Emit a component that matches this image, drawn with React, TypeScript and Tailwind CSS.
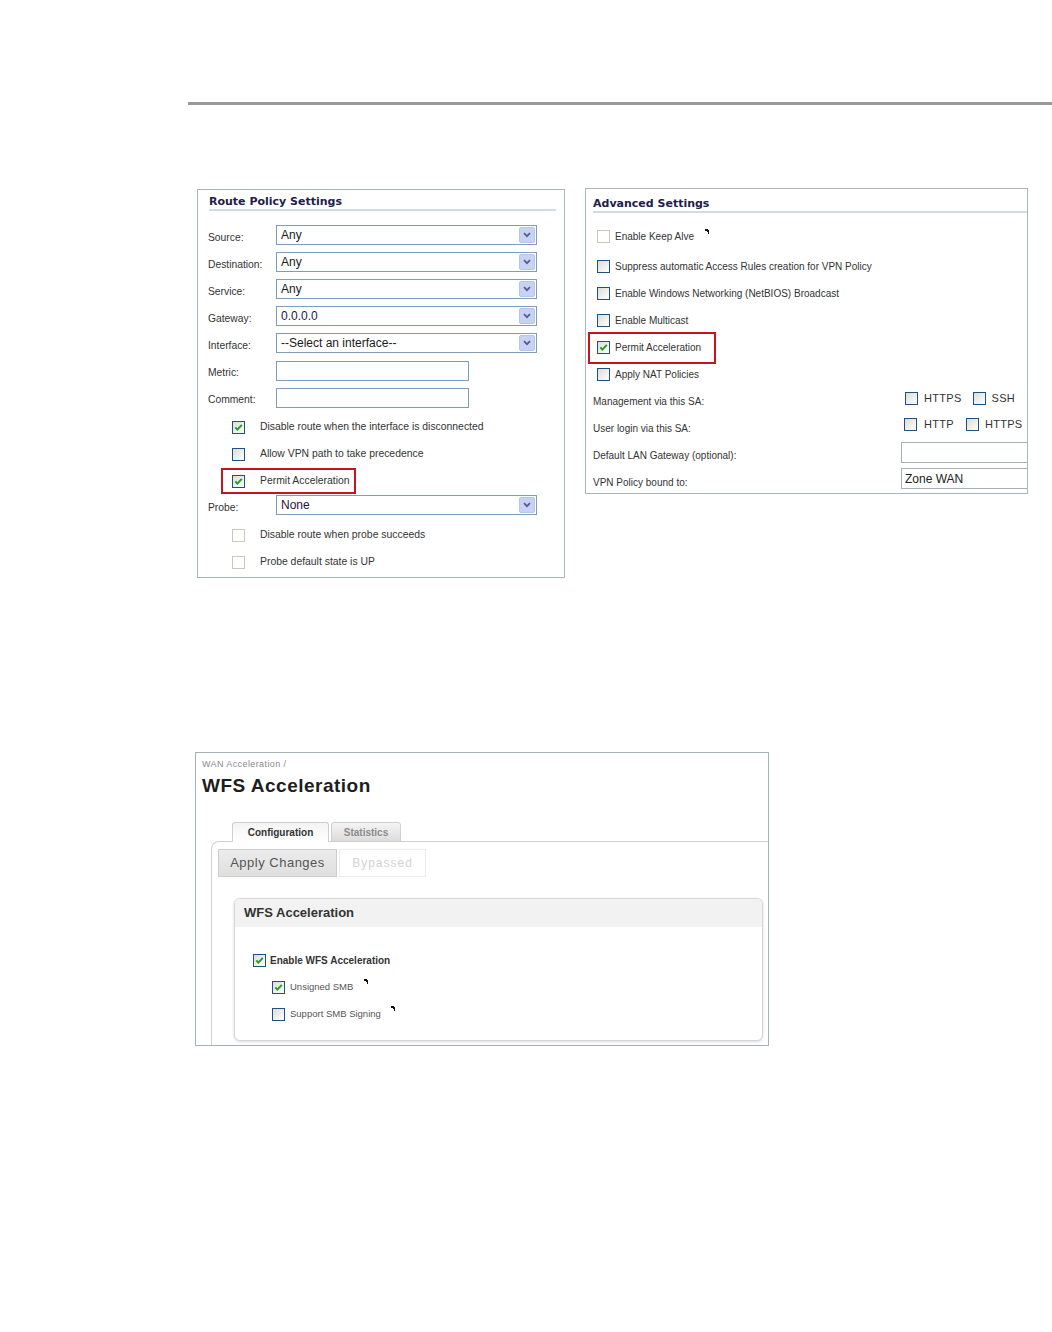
import React from 'react';

const sans = "font-['Liberation_Sans',Arial,sans-serif]";
const heading = "font-['DejaVu_Sans',Verdana,sans-serif]";

function Check({ on = false, off = false }: { on?: boolean; off?: boolean }) {
  return (
    <span
      className={`flex h-[13px] w-[13px] shrink-0 items-center justify-center border ${
        off ? 'border-[#cac8bb] bg-white' : 'border-[#1c5180] bg-linear-to-br from-[#dcdcd7] to-white'
      }`}
    >
      {on && (
        <svg width="9" height="9" viewBox="0 0 9 9">
          <path d="M1.3 4.4 L3.4 6.6 L7.8 1.9" fill="none" stroke="#21a121" strokeWidth="2" />
        </svg>
      )}
    </span>
  );
}

function Mark() {
  return (
    <svg width="4" height="5" viewBox="0 0 4 5" className="shrink-0">
      <path d="M0 0h3v1h1v4h-1v-2h-1v-1h-2z" fill="#111" />
    </svg>
  );
}

function Select({ value, w, tone = 'text-[#1a1a1a]' }: { value: string; w: string; tone?: string }) {
  return (
    <div className={`flex h-[20px] items-center border border-[#7f9db9] bg-white ${w}`}>
      <span className={`flex-1 pl-[4px] text-[12px] leading-[14px] ${tone}`}>{value}</span>
      <span className="mr-px flex h-[16px] w-[16px] items-center justify-center rounded-[2px] border border-[#b6c3ec] bg-[#c8d2f4]">
        <svg width="8" height="6" viewBox="0 0 8 6">
          <path d="M1 1.2l3 3 3-3" stroke="#4d5f8a" strokeWidth="1.7" fill="none" />
        </svg>
      </span>
    </div>
  );
}

function FieldRow({ label, children }: { label: string; children: React.ReactNode }) {
  return (
    <div className="flex h-[27px] items-start">
      <div className="w-[68px] shrink-0 pt-[10px] text-[10.3px] leading-[12px] text-[#333]">{label}</div>
      <div className="mt-[3px]">{children}</div>
    </div>
  );
}

function CbRow({ label, on, off }: { label: string; on?: boolean; off?: boolean }) {
  return (
    <div className="flex h-[27px] items-center gap-[15px] pl-[24px] pt-[5px]">
      <Check on={on} off={off} />
      <span className="text-[10.4px] leading-[12px] text-[#333]">{label}</span>
    </div>
  );
}

function RoutePolicy() {
  return (
    <div className={`mt-px h-[389px] w-[368px] border border-[#a7b6bf] ${sans}`}>
      <div
        className={`ml-[11px] mr-[8px] border-b-2 border-[#d0dce4] pt-[5px] text-[11px] font-bold leading-[14px] text-[#20204a] ${heading}`}
      >
        Route Policy Settings
      </div>
      <div className="mt-[11px] pl-[10px]">
        <FieldRow label="Source:">
          <Select value="Any" w="w-[261px]" />
        </FieldRow>
        <FieldRow label="Destination:">
          <Select value="Any" w="w-[261px]" />
        </FieldRow>
        <FieldRow label="Service:">
          <Select value="Any" w="w-[261px]" />
        </FieldRow>
        <FieldRow label="Gateway:">
          <Select value="0.0.0.0" w="w-[261px]" tone="text-[#2a1446]" />
        </FieldRow>
        <FieldRow label="Interface:">
          <Select value="--Select an interface--" w="w-[261px]" />
        </FieldRow>
        <FieldRow label="Metric:">
          <div className="mt-px h-[20px] w-[193px] border border-[#7f9db9] bg-white" />
        </FieldRow>
        <FieldRow label="Comment:">
          <div className="mt-px h-[20px] w-[193px] border border-[#7f9db9] bg-white" />
        </FieldRow>
        <CbRow label="Disable route when the interface is disconnected" on />
        <CbRow label="Allow VPN path to take precedence" />
        <div className="flex h-[27px] items-start pl-[13px] pt-[3px]">
          <div className="flex h-[26px] w-[135px] shrink-0 items-center gap-[15px] border-2 border-[#c4161c] pl-[9px]">
            <Check on />
            <span className="text-[10.4px] leading-[12px] text-[#333]">Permit Acceleration</span>
          </div>
        </div>
        <FieldRow label="Probe:">
          <Select value="None" w="w-[261px]" tone="text-[#2a1446]" />
        </FieldRow>
        <CbRow label="Disable route when probe succeeds" off />
        <CbRow label="Probe default state is UP" off />
      </div>
    </div>
  );
}

function AdvRow({ label, on, off, mark }: { label: string; on?: boolean; off?: boolean; mark?: boolean }) {
  return (
    <div className="flex h-[27px] items-center gap-[5px] pl-[4px]">
      <Check on={on} off={off} />
      <span className="text-[10px] leading-[12px] text-[#333]">{label}</span>
      {mark && (
        <span className="mb-[10px] ml-[6px]">
          <Mark />
        </span>
      )}
    </div>
  );
}

function Advanced() {
  return (
    <div className={`h-[306px] w-[443px] overflow-hidden border border-[#a7b6bf] ${sans}`}>
      <div
        className={`ml-[7px] border-b-2 border-[#d0dce4] pt-[8px] text-[11px] font-bold leading-[14px] text-[#20204a] ${heading}`}
      >
        Advanced Settings
      </div>
      <div className="mt-[10px] pl-[7px]">
        <AdvRow label="Enable Keep Alve" off mark />
        <div className="mt-[3px]">
          <AdvRow label="Suppress automatic Access Rules creation for VPN Policy" />
        </div>
        <AdvRow label="Enable Windows Networking (NetBIOS) Broadcast" />
        <AdvRow label="Enable Multicast" />
        <div className="flex h-[27px] items-center">
          <div className="-ml-[5px] flex h-[32px] w-[128px] shrink-0 items-center gap-[5px] border-2 border-[#c4161c] pl-[7px]">
            <Check on />
            <span className="text-[10px] leading-[12px] text-[#333]">Permit Acceleration</span>
          </div>
        </div>
        <AdvRow label="Apply NAT Policies" />
        <div className="flex h-[27px] items-center">
          <div className="w-[308px] shrink-0 text-[10px] leading-[12px] text-[#333]">Management via this SA:</div>
          <div className="mb-[7px] flex shrink-0 items-center pl-[4px] text-[11px] leading-[13px] text-[#333]">
            <Check />
            <span className="ml-[6px] tracking-[0.3px]">HTTPS</span>
            <span className="ml-[11px]">
              <Check />
            </span>
            <span className="ml-[6px] tracking-[0.3px]">SSH</span>
          </div>
        </div>
        <div className="flex h-[27px] items-center">
          <div className="w-[308px] shrink-0 text-[10px] leading-[12px] text-[#333]">User login via this SA:</div>
          <div className="mb-[9px] flex shrink-0 items-center pl-[3px] text-[11px] leading-[13px] text-[#333]">
            <Check />
            <span className="ml-[7px] tracking-[0.3px]">HTTP</span>
            <span className="ml-[12px]">
              <Check />
            </span>
            <span className="ml-[6px] tracking-[0.3px]">HTTPS</span>
          </div>
        </div>
        <div className="flex h-[27px] items-center">
          <div className="w-[308px] shrink-0 text-[10px] leading-[12px] text-[#333]">Default LAN Gateway (optional):</div>
          <div className="mb-[6px] h-[21px] w-[140px] shrink-0 border border-[#a8b0b8] bg-white" />
        </div>
        <div className="flex h-[27px] items-center">
          <div className="w-[308px] shrink-0 text-[10px] leading-[12px] text-[#333]">VPN Policy bound to:</div>
          <div className="mb-[8px] flex h-[21px] w-[140px] shrink-0 items-center border border-[#a8b0b8] bg-white pl-[3px] text-[12px] text-[#222]">
            Zone WAN
          </div>
        </div>
      </div>
    </div>
  );
}

function WfsPanel() {
  return (
    <div className={`h-[294px] w-[574px] overflow-hidden border border-[#a3b3b3] bg-white ${sans}`}>
      <div className="pl-[6px] pt-[6px] text-[9px] leading-[10px] tracking-[0.4px] text-[#8a8a8a]">WAN Acceleration /</div>
      <div className="mt-[6px] pl-[6px] text-[19px] font-bold leading-[22px] tracking-[0.5px] text-[#1e1e1e]">
        WFS Acceleration
      </div>
      <div className="relative z-10 mt-[25px] flex h-[20px] items-end gap-[2px] pl-[36px]">
        <div className="flex h-[20px] w-[97px] items-center justify-center rounded-t-[3px] border border-b-0 border-[#cfcfcf] bg-linear-to-b from-[#f3f3f3] to-white text-[10px] font-bold text-[#333]">
          Configuration
        </div>
        <div className="flex h-[20px] w-[70px] items-center justify-center rounded-t-[3px] border border-[#cfcfcf] bg-linear-to-b from-[#f4f4f4] to-[#dcdcdc] text-[10px] font-bold text-[#8c8c8c]">
          Statistics
        </div>
      </div>
      <div className="-mt-px ml-[15px] h-[260px] rounded-tl-[8px] border-l border-t border-[#d0d0d0] pl-[6px] pt-[7px]">
        <div className="flex">
          <div className="flex h-[28px] w-[119px] items-center justify-center border border-[#cdcdcd] bg-linear-to-b from-[#ececec] to-[#dfdfdf] text-[13px] tracking-[0.5px] text-[#555]">
            Apply Changes
          </div>
          <div className="ml-[2px] flex h-[28px] w-[87px] items-center justify-center border border-[#ececec] bg-white text-[12px] tracking-[1px] text-[#d2d2d2]">
            Bypassed
          </div>
        </div>
        <div className="ml-[16px] mt-[21px] h-[143px] w-[529px] rounded-[6px] border border-[#d6d6d6] bg-white shadow-[0_1px_3px_rgba(0,0,0,0.15)]">
          <div className="flex h-[28px] items-center rounded-t-[6px] bg-[#f2f2f2] pl-[9px] text-[13px] font-bold text-[#333]">
            WFS Acceleration
          </div>
          <div className="pl-[18px] pt-[20px]">
            <div className="flex h-[27px] items-center gap-[4px]">
              <Check on />
              <span className="text-[10px] font-bold text-[#333]">Enable WFS Acceleration</span>
            </div>
            <div className="flex h-[27px] items-center gap-[5px] pl-[19px]">
              <Check on />
              <span className="text-[9.5px] text-[#555]">Unsigned SMB</span>
              <span className="mb-[12px] ml-[6px]">
                <Mark />
              </span>
            </div>
            <div className="flex h-[27px] items-center gap-[5px] pl-[19px]">
              <Check />
              <span className="text-[9.5px] text-[#555]">Support SMB Signing</span>
              <span className="mb-[12px] ml-[5px]">
                <Mark />
              </span>
            </div>
          </div>
        </div>
      </div>
    </div>
  );
}

export default function App() {
  return (
    <div className="min-h-[1332px] w-[1052px] bg-white">
      <div className="pl-[188px] pt-[102px]">
        <div className="h-[3px] bg-[#9a9a9a]" />
      </div>
      <div className="mt-[83px] flex items-start gap-[20px] pl-[197px]">
        <RoutePolicy />
        <Advanced />
      </div>
      <div className="mt-[174px] pl-[195px]">
        <WfsPanel />
      </div>
    </div>
  );
}
